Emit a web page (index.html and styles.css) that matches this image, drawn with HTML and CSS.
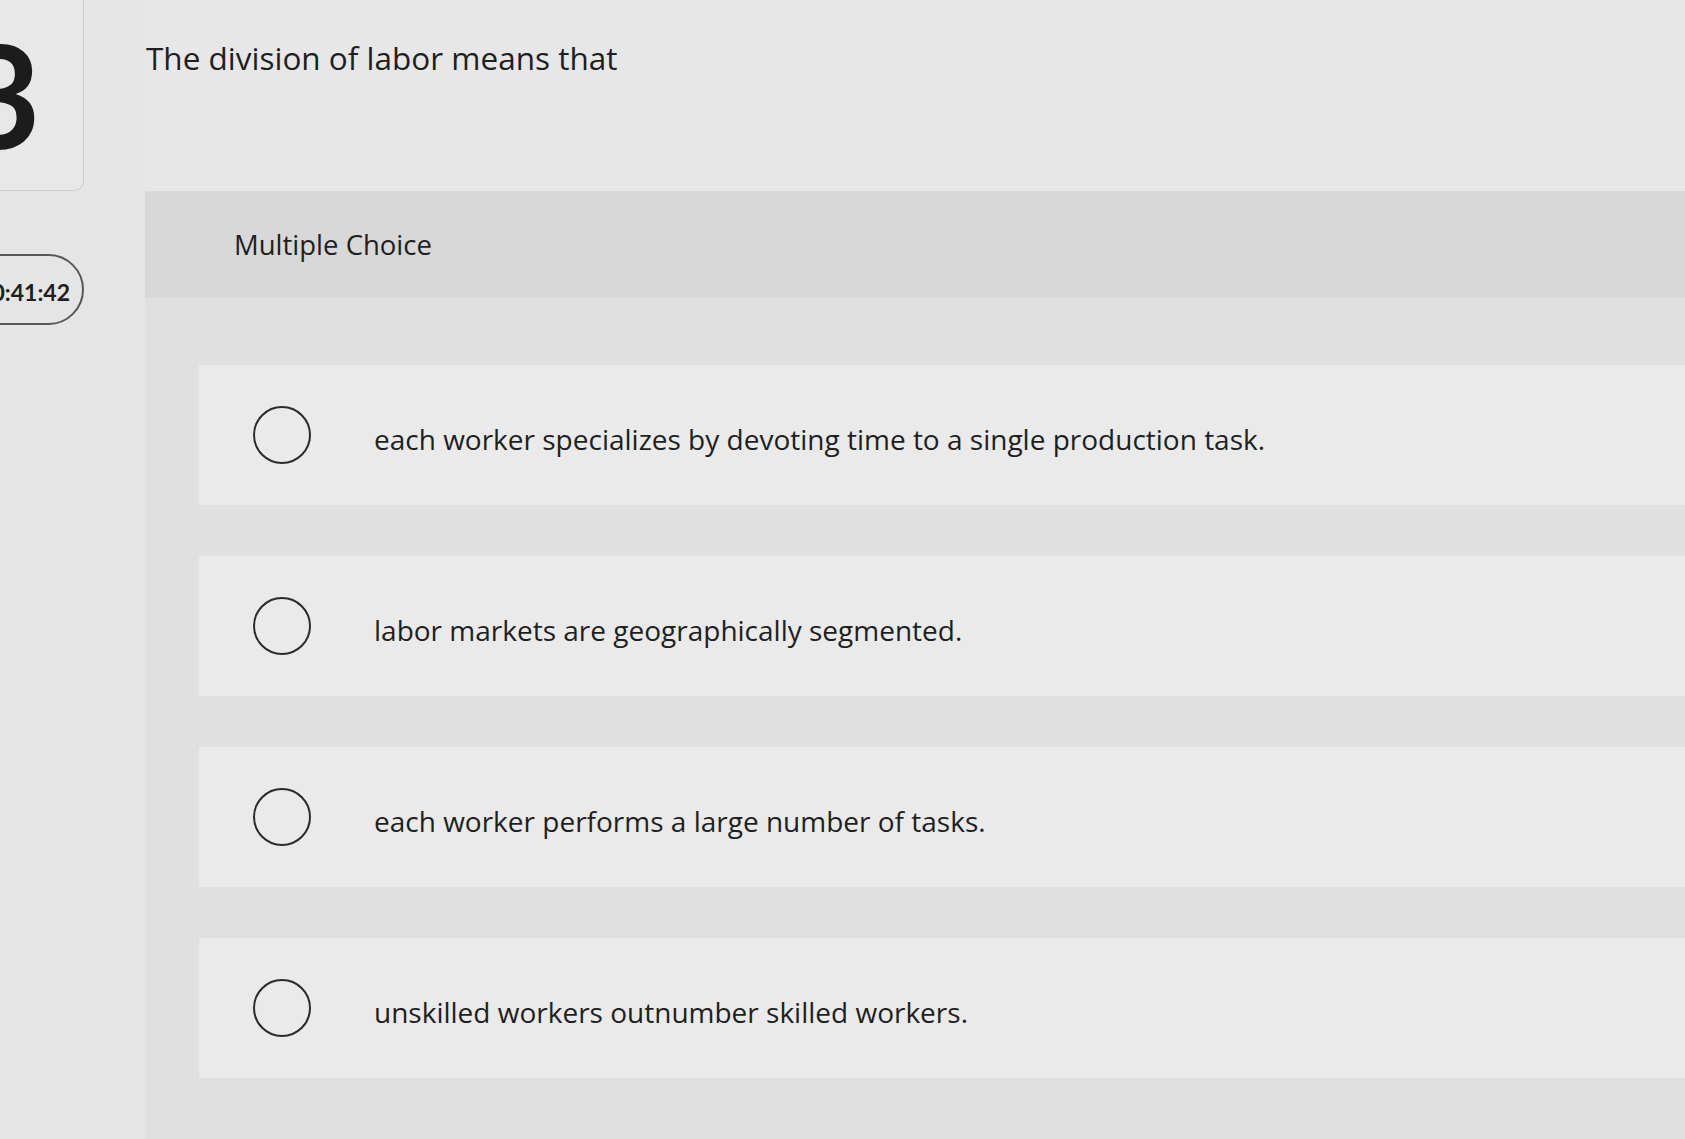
FILE: index.html
```html
<!DOCTYPE html>
<html lang="en">
<head>
<meta charset="utf-8">
<title>Multiple Choice</title>
<link rel="stylesheet" href="styles.css">
</head>
<body>
<div class="page">
  <aside class="side">
    <div class="qnum"><span class="qnum-digit">3</span></div>
    <div class="timer">0:41:42</div>
  </aside>
  <main class="main">
    <h1 class="question">The division of labor means that</h1>
    <div class="mc-band">Multiple Choice</div>
    <div class="options">
      <label class="option"><span class="radio"></span><span class="opt-text">each worker specializes by devoting time to a single production task.</span></label>
      <label class="option"><span class="radio"></span><span class="opt-text">labor markets are geographically segmented.</span></label>
      <label class="option"><span class="radio"></span><span class="opt-text">each worker performs a large number of tasks.</span></label>
      <label class="option"><span class="radio"></span><span class="opt-text">unskilled workers outnumber skilled workers.</span></label>
    </div>
  </main>
</div>
</body>
</html>
```
FILE: styles.css
```css
html, body {
  margin: 0;
  padding: 0;
}
body {
  background: #e5e6e5;
  font-family: "Open Sans", Lato, "Liberation Sans", sans-serif;
  color: #1f1f1f;
  overflow: hidden;
}
.page {
  display: flex;
  min-height: 1139px;
}
.side {
  width: 145px;
  flex: none;
  display: flex;
  flex-direction: column;
  overflow: hidden;
  background: #e4e5e4;
}
.qnum {
  margin-left: -80px;
  width: 164px;
  height: 191px;
  box-sizing: border-box;
  border: 1px solid #cdcecd;
  border-top: none;
  border-radius: 0 0 10px 0;
  background: #e7e8e7;
  display: flex;
  align-items: center;
  justify-content: flex-end;
  padding: 0 42px 4px 0;
}
.qnum-digit {
  font-family: Lato, "Open Sans", sans-serif;
  font-size: 143px;
  font-weight: 700;
  line-height: 1;
  color: #1c1c1c;
}
.timer {
  margin-top: 63px;
  margin-left: -60px;
  width: 144px;
  height: 71px;
  box-sizing: border-box;
  border: 2px solid #575857;
  border-radius: 36px;
  display: flex;
  align-items: center;
  justify-content: flex-end;
  padding: 4px 12px 0 0;
  font-family: Lato, "Open Sans", sans-serif;
  font-size: 23px;
  font-weight: 700;
  color: #1f1f1f;
}
.main {
  flex: 1;
  display: flex;
  flex-direction: column;
}
.question {
  margin: 0;
  height: 191px;
  box-sizing: border-box;
  padding: 40px 0 0 1px;
  font-size: 31.5px;
  font-weight: 400;
  line-height: 36px;
  background: #e6e7e6;
}
.mc-band {
  height: 107px;
  box-sizing: border-box;
  background: #d7d8d7;
  display: flex;
  align-items: center;
  padding-left: 89px;
  font-size: 27.5px;
}
.options {
  flex: 1;
  background: #dfe0df;
  padding: 67px 0 0 54px;
  display: flex;
  flex-direction: column;
  gap: 51px;
}
.option {
  height: 140px;
  background: #e9eae9;
  display: flex;
  align-items: center;
  padding-left: 54px;
  box-sizing: border-box;
}
.radio {
  width: 58px;
  height: 58px;
  flex: none;
  box-sizing: border-box;
  border: 2px solid #2b2b2b;
  border-radius: 50%;
  margin-right: 63px;
}
.opt-text {
  font-size: 28px;
  padding-top: 8px;
}
```
